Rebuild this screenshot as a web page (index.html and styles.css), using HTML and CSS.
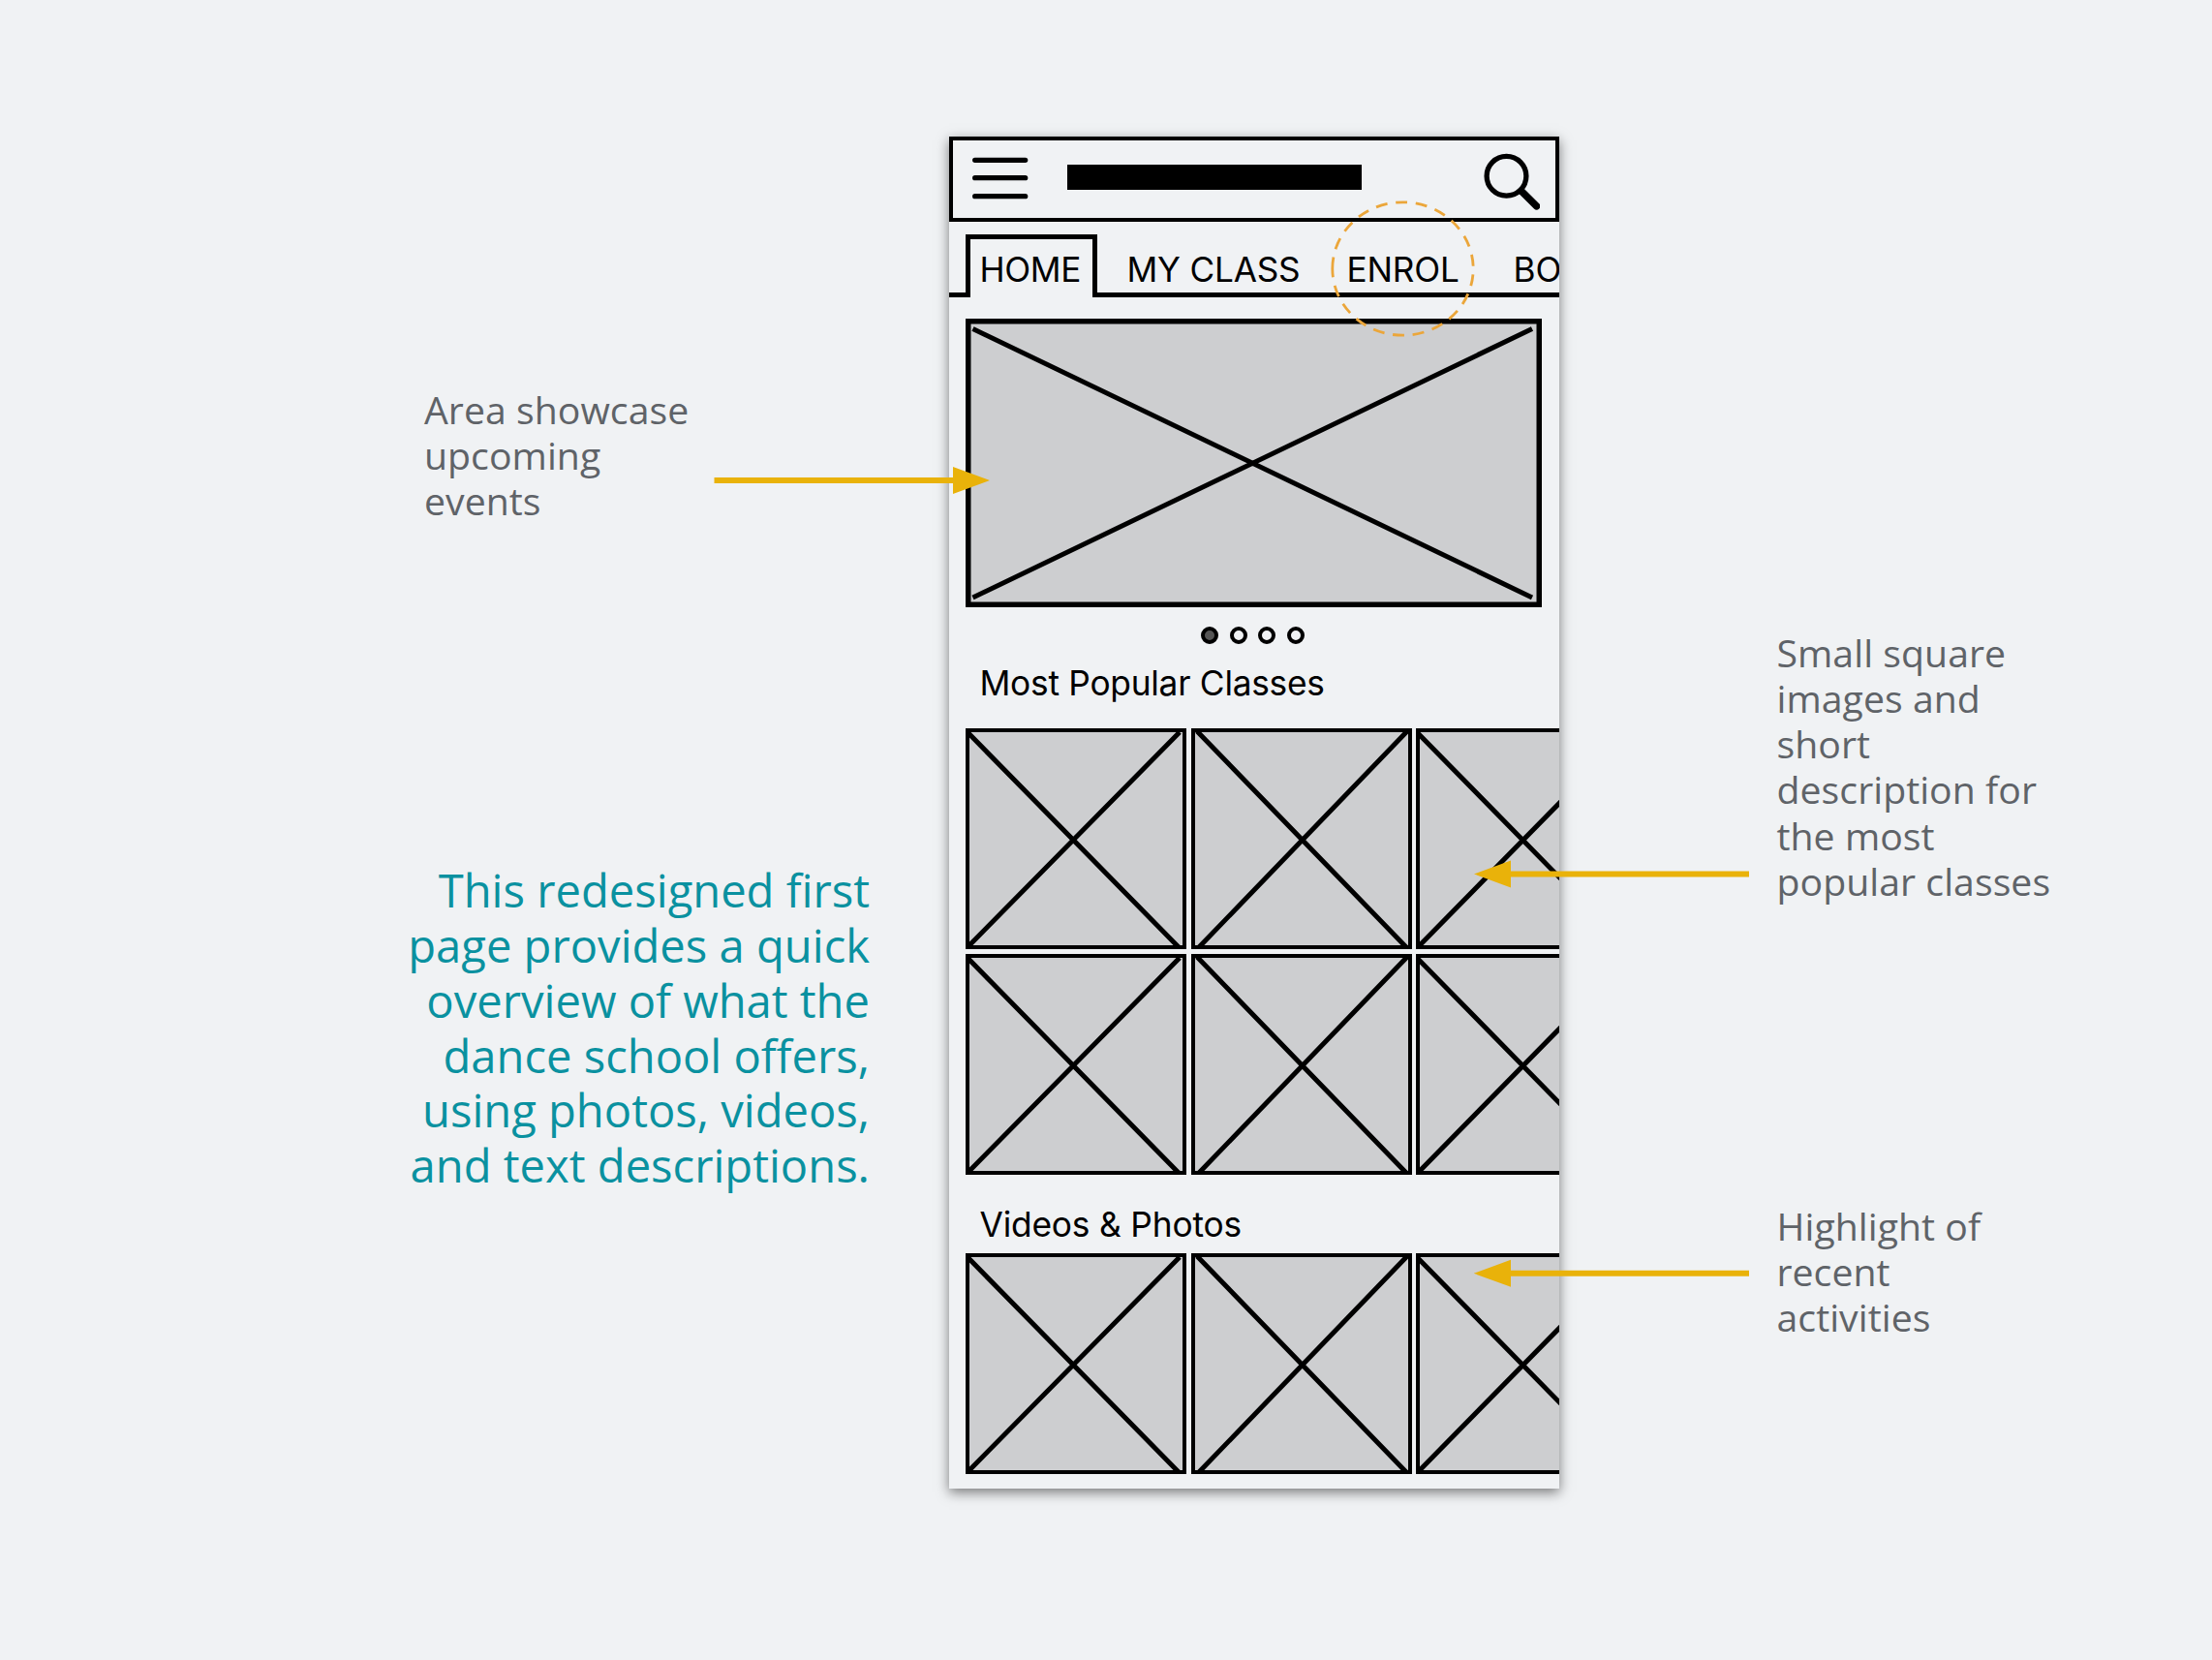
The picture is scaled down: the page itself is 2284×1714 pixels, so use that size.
FILE: index.html
```
<!DOCTYPE html>
<html lang="en">
<head>
  <meta charset="UTF-8">
  <title>Dance School Wireframe</title>
  <link rel="stylesheet" href="styles.css">
</head>

<body>
  <div class="slide">
    <!-- Left notes -->
    <div class="column left">
      <p class="note events-note">Area showcase<br>upcoming<br>events</p>
      <p class="summary">This redesigned first<br>page provides a quick<br>overview of what the<br>dance school offers,<br>using photos, videos,<br>and text descriptions.</p>
    </div>

    <!-- Phone -->
    <div class="phone">
      <header class="top-bar">
        <svg class="menu-icon" width="58" height="44" viewBox="0 0 58 44">
          <path d="M2.7 3.3H54.7M2.7 21.7H54.7M2.7 40.7H54.7"/>
        </svg>
        <div class="title-bar"></div>
        <svg class="search-icon" width="60" height="60" viewBox="0 0 60 60">
          <circle cx="25.5" cy="24.8" r="20.4"/>
          <path d="M41 40.3L56.6 55.8"/>
        </svg>
      </header>

      <nav class="tabs">
        <a class="tab active">HOME</a>
        <div class="tab-rest">
          <a class="tab">MY CLASS</a>
          <a class="tab">ENROL</a>
          <a class="tab last">BO</a>
        </div>
      </nav>

      <svg class="hero" width="595" height="298" viewBox="0 0 595 298">
        <rect x="2.75" y="2.75" width="589.5" height="292.5"/>
        <path d="M7.5 10.5L585 288M7.5 288L585 10.5"/>
      </svg>

      <div class="dots">
        <i class="dot on"></i><i class="dot"></i><i class="dot"></i><i class="dot"></i>
      </div>

      <h2 class="heading">Most Popular Classes</h2>
      <div class="tiles">
        <svg class="tile" viewBox="0 0 228 228"><rect x="2" y="2" width="224" height="224"/><path d="M2 4L220 226M221 4L2 226"/></svg>
        <svg class="tile" viewBox="0 0 228 228"><rect x="2" y="2" width="224" height="224"/><path d="M6 3L222 226M223 3L8 226"/></svg>
        <svg class="tile" viewBox="0 0 228 228"><rect x="2" y="2" width="224" height="224"/><path d="M1 4L219 226M220 4L2 226"/></svg>
        <svg class="tile" viewBox="0 0 228 228"><rect x="2" y="2" width="224" height="224"/><path d="M2 4L220 226M221 4L2 226"/></svg>
        <svg class="tile" viewBox="0 0 228 228"><rect x="2" y="2" width="224" height="224"/><path d="M6 3L222 226M223 3L8 226"/></svg>
        <svg class="tile" viewBox="0 0 228 228"><rect x="2" y="2" width="224" height="224"/><path d="M1 4L219 226M220 4L2 226"/></svg>
      </div>

      <h2 class="heading videos">Videos &amp; Photos</h2>
      <div class="tiles">
        <svg class="tile" viewBox="0 0 228 228"><rect x="2" y="2" width="224" height="224"/><path d="M2 4L220 226M221 4L2 226"/></svg>
        <svg class="tile" viewBox="0 0 228 228"><rect x="2" y="2" width="224" height="224"/><path d="M6 3L222 226M223 3L8 226"/></svg>
        <svg class="tile" viewBox="0 0 228 228"><rect x="2" y="2" width="224" height="224"/><path d="M1 4L219 226M220 4L2 226"/></svg>
      </div>
    </div>

    <!-- Right notes -->
    <div class="column right">
      <p class="note classes-note">Small square<br>images and<br>short<br>description for<br>the most<br>popular classes</p>
      <p class="note recent-note">Highlight of<br>recent<br>activities</p>
    </div>

    <!-- Arrows and highlight drawn over the phone -->
    <svg class="marks" width="2284" height="1714" viewBox="0 0 2284 1714">
      <path class="line" d="M737.5 496H990M1555 902.4H1806M1555 1314.8H1806"/>
      <path class="head" d="M984 482L1022 496L984 510ZM1560 888.4L1522 902.4L1560 916.4ZM1560 1300.8L1521.7 1314.8L1560 1328.8Z"/>
      <path class="ring" d="M1375.8 277.5A72.7 68.7 0 0 1 1521.2 277.5A72.7 68.7 0 0 1 1375.8 277.5"/>
    </svg>
  </div>
</body>
</html>
```
FILE: styles.css
```
body {
  margin: 0;
  background-color: #f0f2f4;
}

.slide {
  position: relative;
  display: flex;
  align-items: flex-start;
  width: 2284px;
  height: 1714px;
  overflow: hidden;
  font-family: 'Open Sans', sans-serif;
}

.column p {
  margin: 0;
  white-space: nowrap;
}

.left {
  width: 980px;
}

.note {
  font-size: 39.2px;
  line-height: 47.15px;
  letter-spacing: 0.05px;
  color: #5f6368;
}

.events-note {
  padding: 399px 0 0 438px;
}

.summary {
  padding: 351px 82px 0 0;
  font-size: 47.15px;
  line-height: 56.7px;
  text-align: right;
  color: #0a91a0;
}

.right {
  padding: 650px 0 0 225px;
}

.recent-note {
  padding-top: 309px;
}

.phone {
  width: 629.5px;
  height: 1396px;
  margin-top: 141px;
  overflow: hidden;
  background-color: #f0f2f4;
  box-shadow: 0 4px 12px rgba(0, 0, 0, 0.5);
  font-family: 'Inter', sans-serif;
  color: #000;
}

/* Header */
.top-bar {
  display: flex;
  box-sizing: border-box;
  height: 88px;
  padding: 14px 0 0 20px;
  border: 4px solid #000;
}

.top-bar path,
.top-bar circle {
  fill: none;
  stroke: #000;
  stroke-width: 5.3;
  stroke-linecap: round;
}

.menu-icon {
  margin-top: 3px;
}

.title-bar {
  width: 304px;
  height: 26px;
  margin: 11px 0 0 40px;
  background-color: #000;
}

.search-icon {
  margin: -2px 0 0 124px;
}

.top-bar .search-icon path {
  stroke-width: 7.5;
}

/* Tabs */
.tabs {
  display: flex;
  height: 65px;
  margin-top: 13px;
  font-size: 35.2px;
  line-height: 43px;
  letter-spacing: -0.2px;
  white-space: nowrap;
}

.tabs::before {
  content: "";
  width: 17px;
  border-bottom: 5px solid #000;
}

.active {
  box-sizing: border-box;
  width: 136px;
  padding: 10px 0 0 9.5px;
  border: 5px solid #000;
  border-bottom: none;
  letter-spacing: -0.4px;
}

.tab-rest {
  display: flex;
  flex: 1;
  gap: 48px;
  min-width: 0;
  padding: 15px 0 0 30.5px;
  border-bottom: 5px solid #000;
  overflow: hidden;
}

.last {
  margin-left: 8px;
}

/* Image placeholders */
.hero,
.tile {
  display: block;
  flex: none;
  fill: #cdced0;
  stroke: #000;
  stroke-width: 5.5;
}

.hero {
  margin: 22px 0 0 17px;
}

.hero path {
  stroke-width: 5;
}

.dots {
  display: flex;
  gap: 11.7px;
  margin: 20px 0 0 260px;
}

.dot {
  box-sizing: border-box;
  width: 18px;
  height: 18px;
  border: 4px solid #000;
  border-radius: 50%;
}

.dot.on {
  background-color: #555;
}

.heading {
  margin: 19px 0 25px 31.5px;
  font-size: 35.3px;
  font-weight: 400;
  line-height: 43px;
  letter-spacing: -0.26px;
}

.heading.videos {
  margin: 30px 0 8px 31.5px;
  letter-spacing: -0.18px;
}

.tiles {
  display: grid;
  grid-template-columns: repeat(3, 228px);
  gap: 4.6px;
  padding-left: 17px;
}

.tile {
  width: 228px;
  height: 228px;
  stroke-width: 4;
}

.tile path {
  stroke-width: 5;
}

/* Annotations */
.marks {
  position: absolute;
  top: 0;
  left: 0;
}

.line {
  stroke: #e9b20a;
  stroke-width: 6;
}

.head {
  fill: #e9b20a;
}

.ring {
  fill: none;
  stroke: #eba63a;
  stroke-width: 2.8;
  stroke-dasharray: 12 8.7;
}
```
